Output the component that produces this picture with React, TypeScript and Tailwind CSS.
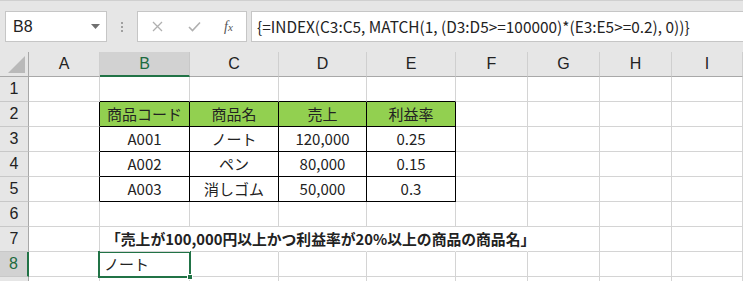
const COLS = ['A', 'B', 'C', 'D', 'E', 'F', 'G', 'H', 'I'];

type Cell = { text?: string; align?: 'center' | 'left'; bold?: boolean; fill?: boolean };

// シートの中身
const DATA: Record<string, Cell> = {
  B2: { text: '商品コード', align: 'center', fill: true },
  C2: { text: '商品名', align: 'center', fill: true },
  D2: { text: '売上', align: 'center', fill: true },
  E2: { text: '利益率', align: 'center', fill: true },
  B3: { text: 'A001', align: 'center' },
  C3: { text: 'ノート', align: 'center' },
  D3: { text: '120,000', align: 'center' },
  E3: { text: '0.25', align: 'center' },
  B4: { text: 'A002', align: 'center' },
  C4: { text: 'ペン', align: 'center' },
  D4: { text: '80,000', align: 'center' },
  E4: { text: '0.15', align: 'center' },
  B5: { text: 'A003', align: 'center' },
  C5: { text: '消しゴム', align: 'center' },
  D5: { text: '50,000', align: 'center' },
  E5: { text: '0.3', align: 'center' },
  B7: { text: '「売上が100,000円以上かつ利益率が20%以上の商品の商品名」', align: 'left', bold: true },
  B8: { text: 'ノート', align: 'left' },
};

const inTable = (r: number, c: number) => r >= 2 && r <= 5 && c >= 1 && c <= 4;

const FormulaBar = () => (
  <div className="h-[52px] bg-[#e6e6e6] border-t border-[#d0d0d0] relative flex items-start pt-[10px]">
    {/* 名前ボックス */}
    <div className="ml-[5px] w-[102px] h-[31px] bg-white border border-[#c6c6c6] flex items-center justify-between pl-[7px] pr-[6px]">
      <span className="text-[16px] text-[#222] font-['Liberation_Sans',sans-serif]">B8</span>
      <svg width="9" height="6" viewBox="0 0 9 6">
        <path d="M0 0 L9 0 L4.5 5 Z" fill="#707070" />
      </svg>
    </div>
    <div className="w-[30px] h-[31px] flex flex-col items-center justify-center gap-[2px]">
      <span className="w-[2px] h-[2px] bg-[#a0a0a0]" />
      <span className="w-[2px] h-[2px] bg-[#a0a0a0]" />
      <span className="w-[2px] h-[2px] bg-[#a0a0a0]" />
    </div>
    {/* キャンセル・入力・関数 */}
    <div className="w-[110px] h-[31px] bg-white border border-[#c6c6c6] flex items-center">
      <svg className="ml-[14px]" width="11" height="11" viewBox="0 0 11 11">
        <path d="M1 1 L10 10 M10 1 L1 10" stroke="#b0b0b0" strokeWidth="1.3" />
      </svg>
      <svg className="ml-[25px]" width="13" height="11" viewBox="0 0 13 11">
        <path d="M1 6 L4.5 9.5 L12 1.5" stroke="#b0b0b0" strokeWidth="1.6" fill="none" />
      </svg>
      <span className="ml-[23px] text-[14px] italic text-[#555] font-['Liberation_Serif',serif] leading-none">
        f<span className="text-[11px]">x</span>
      </span>
    </div>
    {/* 数式 */}
    <div className="ml-[4px] flex-1 h-[31px] bg-white border border-r-0 border-[#c6c6c6] flex items-center pl-[5px]">
      <span className="text-[15.4px] text-[#222] font-['Noto_Sans_CJK_JP',sans-serif] whitespace-nowrap">
        {'{=INDEX(C3:C5, MATCH(1, (D3:D5>=100000)*(E3:E5>=0.2), 0))}'}
      </span>
    </div>
  </div>
);

const Sheet = () => {
  const rows = [1, 2, 3, 4, 5, 6, 7, 8, 9];
  return (
    <div className="relative grid grid-cols-[29px_71px_90px_89px_88px_89px_72px_72px_72px_1fr] auto-rows-[25px] font-['Noto_Sans_CJK_JP',sans-serif] text-[15px] text-[#222]">
      {/* 列見出し */}
      <div className="bg-[#e6e6e6] border-r border-b border-[#a8a8a8] flex items-end justify-end pr-[3px] pb-[3px]">
        <svg width="17" height="17" viewBox="0 0 17 17">
          <path d="M17 0 L17 17 L0 17 Z" fill="#b9b9b9" />
        </svg>
      </div>
      {COLS.map((col) =>
        col === 'B' ? (
          <div
            key={col}
            className="bg-[#d2d2d2] border-b-2 border-[#217346] border-r border-r-[#c8c8c8] flex items-center justify-center text-[#1d6b40] font-['Liberation_Sans',sans-serif] text-[16px]"
          >
            {col}
          </div>
        ) : (
          <div
            key={col}
            className="bg-[#e6e6e6] border-b border-[#a8a8a8] border-r border-r-[#cfcfcf] flex items-center justify-center font-['Liberation_Sans',sans-serif] text-[16px]"
          >
            {col}
          </div>
        )
      )}

      {rows.map((r) => (
        <div key={r} className="contents">
          {r === 8 ? (
            <div className="bg-[#d2d2d2] border-r-2 border-[#217346] border-b border-b-[#c8c8c8] flex items-center justify-center text-[#1d6b40] font-['Liberation_Sans',sans-serif] text-[16px]">
              {r}
            </div>
          ) : r === 9 ? (
            // 9行目は上端しか見えていない
            <div className="bg-[#e6e6e6] border-r border-[#a8a8a8]" />
          ) : (
            <div className="bg-[#e6e6e6] border-r border-[#a8a8a8] border-b border-b-[#c8c8c8] flex items-center justify-center font-['Liberation_Sans',sans-serif] text-[16px]">
              {r}
            </div>
          )}
          {COLS.map((col, c) => {
            const cell = DATA[`${col}${r}`];
            const blackBottom = r >= 1 && r <= 5 && c >= 1 && c <= 4;
            const blackRight = inTable(r, c) || (r >= 2 && r <= 5 && c === 0);
            const noRight = r === 7 && c >= 1 && c <= 5;
            const right = noRight
              ? 'border-r border-r-transparent'
              : blackRight
                ? 'border-r border-r-black'
                : 'border-r border-r-[#d4d4d4]';
            const bottom = blackBottom ? 'border-b border-b-black' : 'border-b border-b-[#d4d4d4]';
            return (
              <div
                key={col}
                className={`${right} ${bottom} ${cell?.fill ? 'bg-[#92d050]' : 'bg-white'} flex items-center ${
                  cell?.align === 'center' ? 'justify-center' : 'justify-start pl-[4px]'
                } ${cell?.bold ? 'font-bold text-[14.8px] pl-[6px] overflow-visible whitespace-nowrap z-10' : ''}`}
              >
                {cell?.text}
              </div>
            );
          })}
        </div>
      ))}

      {/* 選択セル B8 */}
      <div className="absolute left-[98px] top-[199px] w-[93px] h-[27px] border-2 border-[#217346] pointer-events-none" />
      <div className="absolute left-[187px] top-[222px] w-[6px] h-[6px] bg-[#217346] border border-white" />
    </div>
  );
};

export default function App() {
  return (
    <div className="w-[743px] h-[281px] overflow-hidden bg-white">
      <FormulaBar />
      <Sheet />
    </div>
  );
}
